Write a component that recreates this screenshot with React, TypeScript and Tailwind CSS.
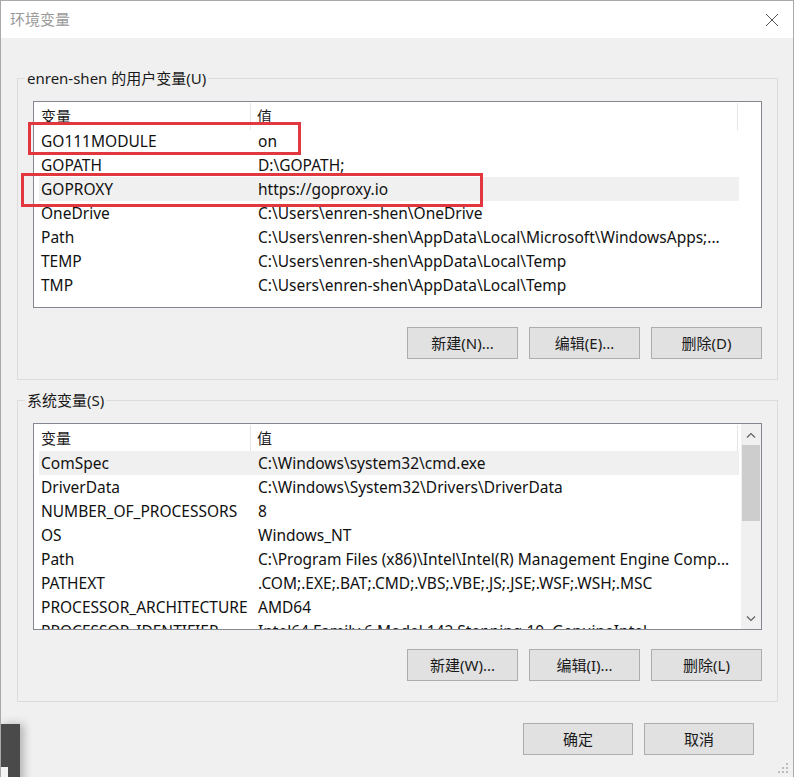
import React from "react";

const FONT = '"Noto Sans", "Noto Sans CJK SC", sans-serif';

type Row = { name: string; value: string; selected?: boolean };

const userRows: Row[] = [
  { name: "GO111MODULE", value: "on" },
  { name: "GOPATH", value: "D:\\GOPATH;" },
  { name: "GOPROXY", value: "https://goproxy.io", selected: true },
  { name: "OneDrive", value: "C:\\Users\\enren-shen\\OneDrive" },
  { name: "Path", value: "C:\\Users\\enren-shen\\AppData\\Local\\Microsoft\\WindowsApps;..." },
  { name: "TEMP", value: "C:\\Users\\enren-shen\\AppData\\Local\\Temp" },
  { name: "TMP", value: "C:\\Users\\enren-shen\\AppData\\Local\\Temp" },
];

const sysRows: Row[] = [
  { name: "ComSpec", value: "C:\\Windows\\system32\\cmd.exe", selected: true },
  { name: "DriverData", value: "C:\\Windows\\System32\\Drivers\\DriverData" },
  { name: "NUMBER_OF_PROCESSORS", value: "8" },
  { name: "OS", value: "Windows_NT" },
  { name: "Path", value: "C:\\Program Files (x86)\\Intel\\Intel(R) Management Engine Comp..." },
  { name: "PATHEXT", value: ".COM;.EXE;.BAT;.CMD;.VBS;.VBE;.JS;.JSE;.WSF;.WSH;.MSC" },
  { name: "PROCESSOR_ARCHITECTURE", value: "AMD64" },
  { name: "PROCESSOR_IDENTIFIER", value: "Intel64 Family 6 Model 142 Stepping 10, GenuineIntel" },
];

function Btn({ label, w = "w-[111px]" }: { label: string; w?: string }) {
  return (
    <div
      className={`${w} h-[32px] flex items-center justify-center bg-[#e1e1e1] border border-[#adadad] text-[15px] text-[#1a1a1a]`}
    >
      {label}
    </div>
  );
}

function ListView({ rows, scroll }: { rows: Row[]; scroll?: boolean }) {
  return (
    <div className="relative w-[729px] h-[207px] border border-[#828790] bg-white overflow-hidden">
      <div className="flex h-[27px] items-center text-[15px] text-[#1a1a1a]">
        <div className="w-[217px] h-full flex items-center pl-[7px] border-r border-[#e5e5e5] mt-[2px]">
          变量
        </div>
        <div className="w-[487px] h-full flex items-center pl-[6px] border-r border-[#e5e5e5] mt-[2px]">
          值
        </div>
      </div>
      <div className="flex flex-col">
        {rows.map((r, i) => (
          <div
            key={i}
            className={`ml-[5px] w-[700px] h-[24px] flex items-center text-[15.5px] text-[#111] whitespace-nowrap ${
              r.selected ? "bg-[#f0f0f0]" : ""
            }`}
          >
            <div className="w-[213px] pl-[2px] overflow-hidden pt-[1px]">{r.name}</div>
            <div className="w-[487px] pl-[6px] overflow-hidden pt-[1px]">{r.value}</div>
          </div>
        ))}
      </div>
      {scroll && (
        <div className="absolute top-0 right-0 w-[20px] h-full bg-[#f0f0f0] flex flex-col">
          <div className="h-[21px] flex items-center justify-center">
            <svg width="10" height="6" viewBox="0 0 10 6">
              <path d="M1 5.5 L5 1.5 L9 5.5" fill="none" stroke="#606060" strokeWidth="1.2" />
            </svg>
          </div>
          <div className="mx-[1px] h-[76px] bg-[#cdcdcd]" />
          <div className="flex-1" />
          <div className="h-[21px] flex items-center justify-center">
            <svg width="10" height="6" viewBox="0 0 10 6">
              <path d="M1 0.5 L5 4.5 L9 0.5" fill="none" stroke="#606060" strokeWidth="1.2" />
            </svg>
          </div>
        </div>
      )}
    </div>
  );
}

function Group({
  title,
  rows,
  buttons,
  scroll,
  className,
}: {
  title: string;
  rows: Row[];
  buttons: string[];
  scroll?: boolean;
  className?: string;
}) {
  return (
    <fieldset className={`w-[761px] ml-[16px] border border-[#dcdcdc] ${className ?? ""}`}>
      <legend className="ml-[7px] px-[2px] text-[15px] leading-[20px] text-[#1a1a1a]">{title}</legend>
      <div className="pl-[15px] pt-[13px] pb-[20px]">
        <ListView rows={rows} scroll={scroll} />
        <div className="mt-[19px] w-[729px] flex justify-end gap-[11px]">
          {buttons.map((b) => (
            <Btn key={b} label={b} />
          ))}
        </div>
      </div>
    </fieldset>
  );
}

export default function App() {
  return (
    <div
      className="relative w-[794px] h-[777px] bg-[#f0f0f0] border-l border-t border-r border-[#a9a9a9] overflow-hidden"
      style={{ fontFamily: FONT }}
    >
      <div className="h-[37px] bg-white flex items-center justify-between pl-[9px] pr-[14px]">
        <span className="text-[15px] text-[#9a9a9a]">环境变量</span>
        <svg width="14" height="14" viewBox="0 0 14 14">
          <path d="M1 1 L13 13 M13 1 L1 13" stroke="#555" strokeWidth="1" fill="none" />
        </svg>
      </div>

      <Group
        className="mt-[30px]"
        title="enren-shen 的用户变量(U)"
        rows={userRows}
        buttons={["新建(N)...", "编辑(E)...", "删除(D)"]}
      />
      <Group
        className="mt-[10px]"
        title="系统变量(S)"
        rows={sysRows}
        scroll
        buttons={["新建(W)...", "编辑(I)...", "删除(L)"]}
      />

      <div className="mt-[21px] w-[753px] flex justify-end gap-[11px]">
        <Btn label="确定" w="w-[110px]" />
        <Btn label="取消" w="w-[110px]" />
      </div>

      {/* red annotation boxes */}
      <div className="absolute left-[27px] top-[121px] w-[273px] h-[33px] border-[3px] border-[#e0383e]" />
      <div className="absolute left-[20px] top-[172px] w-[462px] h-[34px] border-[3px] border-[#e0383e]" />

      {/* resize grip */}
      <svg className="absolute right-[4px] bottom-[3px]" width="12" height="12" viewBox="0 0 12 12">
        <rect x="9" y="1" width="2" height="2" fill="#bdbdbd" />
        <rect x="5" y="5" width="2" height="2" fill="#bdbdbd" />
        <rect x="9" y="5" width="2" height="2" fill="#bdbdbd" />
        <rect x="1" y="9" width="2" height="2" fill="#bdbdbd" />
        <rect x="5" y="9" width="2" height="2" fill="#bdbdbd" />
        <rect x="9" y="9" width="2" height="2" fill="#bdbdbd" />
      </svg>

      {/* background window fragment at bottom-left */}
      <div className="absolute left-[-1px] top-[723px] w-[20px] h-[60px] bg-[#4a4a4a] shadow-[4px_0_8px_rgba(0,0,0,0.25)]" />
      <div className="absolute left-[-1px] top-[766px] w-[8px] h-[12px] bg-[#f4f4f4]" />
    </div>
  );
}
